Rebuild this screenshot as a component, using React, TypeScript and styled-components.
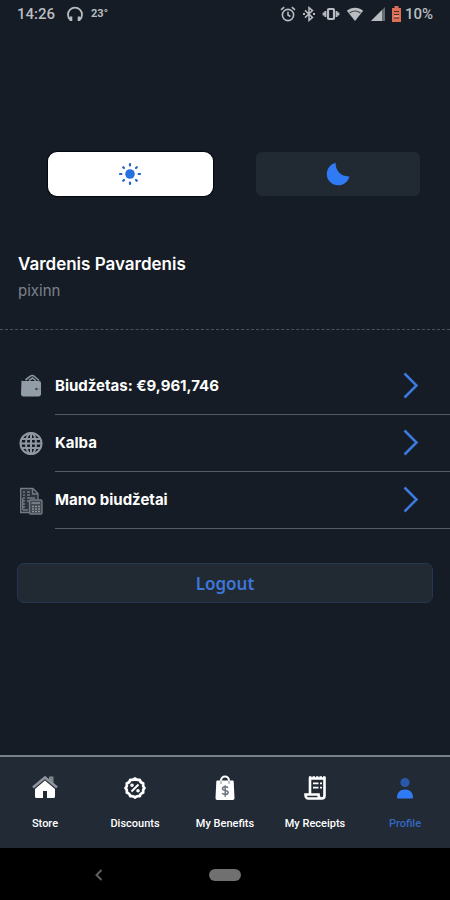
import React from "react";
import styled, { createGlobalStyle } from "styled-components";

const GlobalStyle = createGlobalStyle`
  *, *::before, *::after { box-sizing: border-box; }
  body { margin: 0; background: #151c25; }
  button { font: inherit; margin: 0; padding: 0; border: 0; background: none; cursor: pointer; }
  svg { display: block; flex: none; }
`;

const Screen = styled.div`
  display: flex;
  flex-direction: column;
  min-height: 100vh;
  background: #151c25;
  color: #fff;
  font-family: Inter, sans-serif;
`;

const StatusBar = styled.header`
  display: flex;
  align-items: center;
  justify-content: space-between;
  height: 28px;
  padding: 0 17px;
  color: #b9bcc1;
  font: 500 15px/20px Roboto, sans-serif;
`;

const StatusGroup = styled.div<{ $gap: number }>`
  display: flex;
  align-items: center;
  gap: ${(p) => p.$gap}px;
`;

const Temperature = styled.span`
  font-size: 11px;
  font-weight: 700;
`;

const Battery = styled.div`
  display: flex;
  align-items: center;
  gap: 4px;
`;

const Content = styled.main`
  display: flex;
  flex: 1;
  flex-direction: column;
`;

const ThemeSwitch = styled.div`
  display: grid;
  grid-template-columns: 1fr 1fr;
  gap: 43px;
  padding: 124px 30px 0 48px;
`;

const ThemeButton = styled.button<{ $active?: boolean }>`
  display: flex;
  align-items: center;
  justify-content: center;
  height: 44px;
  border-radius: ${(p) => (p.$active ? 9 : 6)}px;
  background: ${(p) => (p.$active ? "#fff" : "#212a33")};
  box-shadow: ${(p) => (p.$active ? "0 0 1px 1px #05080c" : "none")};
`;

const Identity = styled.section`
  padding: 56px 18px 26px;
  border-bottom: 1px dashed #4a515a;
`;

const FullName = styled.h1`
  margin: 0;
  font-size: 17px;
  font-weight: 600;
  line-height: 24px;
`;

const Account = styled.p`
  margin: 3px 0 0;
  color: #7d828e;
  font-size: 15px;
  line-height: 24px;
`;

const Menu = styled.ul`
  margin: 28px 0 0;
  padding: 0;
  list-style: none;
`;

const MenuItem = styled.button`
  display: flex;
  align-items: center;
  gap: 11px;
  width: 100%;
  padding-left: 18px;
  color: #fff;
  text-align: left;
`;

const MenuBody = styled.span`
  display: flex;
  flex: 1;
  align-items: center;
  justify-content: space-between;
  height: 57px;
  padding-right: 31px;
  border-bottom: 1px solid #565b62;
`;

const MenuLabel = styled.span`
  font-size: 15px;
  font-weight: 700;
  line-height: 24px;
`;

const LogoutButton = styled.button`
  height: 40px;
  margin: 34px 17px 24px;
  padding-top: 2px;
  border: 1px solid #243650;
  border-radius: 7px;
  background: #212a33;
  color: #3d76d8;
  font: 600 17px/24px "Noto Sans", sans-serif;
`;

const TabBar = styled.nav`
  display: grid;
  grid-template-columns: repeat(5, 1fr);
  height: 93px;
  border-top: 2px solid #78818a;
  background: #212a35;
`;

const Tab = styled.a<{ $active?: boolean }>`
  display: flex;
  flex-direction: column;
  align-items: center;
  gap: 15px;
  padding-top: 18px;
  color: ${(p) => (p.$active ? "#3567c0" : "#fff")};
  font: 500 11px/16px Roboto, sans-serif;
  text-decoration: none;
  white-space: nowrap;
`;

const SystemBar = styled.footer`
  display: grid;
  grid-template-columns: 1fr auto 1fr;
  align-items: center;
  height: 52px;
  padding-top: 2px;
  background: #000;
`;

const BackButton = styled.button`
  display: flex;
  justify-content: center;
  width: 24px;
  margin-left: 87px;
`;

const HomeButton = styled.button`
  width: 32px;
  height: 12px;
  border-radius: 6px;
  background: #707070;
`;

const HeadphonesIcon = () => (
  <svg width="18" height="18" viewBox="0 0 18 18" fill="none" stroke="currentColor">
    <path d="M4 14.5A7 7 0 1 1 14 14.5" strokeWidth="1.8" />
    <path d="M5 11.5v4.5M13 11.5v4.5" strokeWidth="2.6" />
  </svg>
);

const AlarmIcon = () => (
  <svg width="16" height="16" viewBox="0 0 16 16" fill="none" stroke="currentColor" strokeWidth="1.6">
    <circle cx="8" cy="9" r="5.6" />
    <path d="M8 5.8V9l2.4 1.5M1 3.8l3.2-2.7M15 3.8l-3.2-2.7" />
  </svg>
);

const BluetoothIcon = () => (
  <svg width="14" height="16" viewBox="0 0 14 16" fill="none" stroke="currentColor" strokeWidth="1.5">
    <path d="M3 4.4l7.5 7L7 14.3V1.7l3.5 2.9L3 11.6" />
    <path d="M1 8h2M11 8h2" strokeWidth="2" />
  </svg>
);

const VibrateIcon = () => (
  <svg width="18" height="16" viewBox="0 0 18 16" fill="none" stroke="currentColor">
    <rect x="6" y="3" width="6" height="10" rx="1" strokeWidth="2.2" />
    <path d="M3.4 5v6M14.6 5v6M1.6 6.5v3M16.4 6.5v3" strokeWidth="1.9" />
  </svg>
);

const WifiIcon = () => (
  <svg width="18" height="16" viewBox="0 0 18 16">
    <path d="M.8 4.7C5.5.7 12.5.7 17.2 4.7L9 15z" fill="currentColor" />
    <path d="M3.5 7q5.500-4 11 0" fill="none" stroke="#454b53" strokeWidth="1.2" />
  </svg>
);

const SignalIcon = () => (
  <svg width="16" height="16" viewBox="0 0 16 16">
    <path d="M1 15L15 1v14z" fill="#666b72" />
    <path d="M1 15L12 4v11z" fill="currentColor" />
  </svg>
);

const BatteryIcon = () => (
  <svg width="9" height="16" viewBox="0 0 9 16">
    <path d="M2.5 0h4v2H9v14H0V2h2.5z" fill="#dd6d55" />
    <path d="M2 5.5h5M2 8.5h5M2 12h5" stroke="#43312f" strokeWidth="1.2" />
    <path d="M2.2 10.2h4.600" stroke="#e9b5a6" />
  </svg>
);

const SunIcon = () => (
  <svg width="24" height="24" viewBox="0 0 24 24" stroke="#2563c7" strokeLinecap="round" strokeWidth="2.2">
    <circle cx="12" cy="12" r="4.8" fill="#286fdf" stroke="none" />
    <path d="M12 2v1.400M12 20.600V22M2 12h1.400M20.600 12H22M5.200 5.200l.8.800M18 18l.8.800M18.800 5.200l-.8.800M6 18l-.8.800" />
  </svg>
);

const MoonIcon = () => (
  <svg width="24" height="24" viewBox="0 0 24 24">
    <path d="M9.7.8C9.2 7.3 13.7 14.7 23.4 14.4 21.9 20 17.5 23.2 12.3 23.2 6 23.2.8 18.5.8 12.2.8 6.8 4.4 2.2 9.7.8z" fill="#307af5" />
  </svg>
);

const WalletIcon = () => (
  <svg width="26" height="26" viewBox="0 0 26 26">
    <path d="M7.5 6L12 2.5c1.500-1.300 3-1.300 4.500 0L21 6.5M11 6.5l3.500-2.500 3.500 3" fill="none" stroke="#8b959e" strokeWidth="1.6" />
    <path d="M3.5 5.7c0 1.200 1 1.300 2.500 1.300h15c1.200 0 2 .8 2 2v11c0 1.600-1 2.500-2.500 2.500h-15C4 22.500 3 21.500 3 20z" fill="#929da7" />
    <circle cx="18.5" cy="15" r="1.3" fill="#3a444e" />
    <path d="M19 15h4" stroke="#7b858f" />
  </svg>
);

const GlobeIcon = () => (
  <svg width="26" height="26" viewBox="0 0 26 26" fill="none" stroke="#9298a1" strokeWidth="2">
    <circle cx="13" cy="12.5" r="10.5" />
    <ellipse cx="13" cy="12.5" rx="5" ry="10.5" />
    <path d="M13 2v21M2.5 12.500h21M4 8h18M4 17h18" />
  </svg>
);

const BudgetIcon = () => (
  <svg width="26" height="28" viewBox="0 0 26 28" fill="none" stroke="#747a83" strokeWidth="1.3">
    <path d="M11.5 25.5H2.7v-24H15l5 5v6" fill="#2b323a" />
    <path d="M14.5 1.5V7H20" />
    <path d="M5 5h2M9 5h3M5 8h2M9 8h3M5 11h2M9 11h8M5 14h2M9 14h3M5 17h2M5 20h2M5 23h5" strokeWidth="1.5" />
    <path d="M4.7 11v12" />
    <rect x="11.5" y="13" width="12.5" height="14" rx="1" fill="#42484f" />
    <path d="M13.5 16h8.500" strokeWidth="2" />
    <path d="M14 19.5h2M17 19.5h2M20 19.5h2M14 22h2M17 22h2M20 22h2M14 24.5h2M17 24.5h2M20 24.5h2" strokeWidth="1.6" stroke="#8c9199" />
  </svg>
);

const ChevronIcon = () => (
  <svg width="18" height="28" viewBox="0 0 18 28" fill="none" stroke="#3c7ae0" strokeWidth="2.5">
    <path d="M3.5 1.5l12 12-12 12" />
  </svg>
);

const StoreIcon = () => (
  <svg width="26" height="26" viewBox="0 0 26 26">
    <path d="M17 1.5h4.500v8L17 6z" fill="#7e858e" />
    <path d="M13 5.5L23 14v7.5c0 .8-.5 1.500-1.500 1.500H15v-7h-4v7H4.500C3.500 23 3 22.300 3 21.500V14z" fill="#fff" />
    <path d="M1 12.500L13 2.500l12 10" fill="none" stroke="#8e949b" strokeWidth="2.6" />
  </svg>
);

const DiscountIcon = () => (
  <svg width="26" height="26" viewBox="0 0 26 26" fill="none" stroke="#fff">
    <path
      d="M13 3.500Q14.700 5.400 17.750 4.800Q18.200 7.800 21.200 8.250Q20.600 11.300 22.500 13Q20.600 14.700 21.200 17.750Q18.200 18.200 17.750 21.200Q14.700 20.600 13 22.500Q11.300 20.600 8.250 21.200Q7.800 18.200 4.800 17.750Q5.400 14.700 3.500 13Q5.400 11.300 4.800 8.250Q7.800 7.800 8.250 4.800Q11.300 5.400 13 3.500z"
      strokeWidth="2.7"
      strokeLinejoin="round"
    />
    <path d="M9.500 16.500l7-7" strokeWidth="2" />
    <circle cx="10" cy="10.300" r="1" strokeWidth="1.6" />
    <circle cx="16" cy="15.800" r="1" strokeWidth="1.6" />
  </svg>
);

const BenefitsIcon = () => (
  <svg width="26" height="26" viewBox="0 0 26 26" fill="none">
    <path d="M9 9V5.500a4 4 0 0 1 8 0V9" stroke="#fff" strokeWidth="2.2" />
    <path d="M5.500 5.500h15c.8 0 1.200.5 1.200 1.200L22.500 23c0 1.300-.6 2-1.800 2H5.300c-1.200 0-1.800-.7-1.800-2L4.300 6.700c0-.7.4-1.200 1.200-1.200z" fill="#fff" />
    <path d="M9 5.500v3.500M17 5.500v3.500" stroke="#89909a" />
    <path d="M16 12.800c-1-1.500-5.500-1.600-5.500.8 0 2.800 5.600 1.200 5.600 4 0 2.500-4.800 2.400-6 .5M13.200 10.300v11.400" stroke="#6b747f" strokeWidth="1.5" />
  </svg>
);

const ReceiptIcon = () => (
  <svg width="26" height="26" viewBox="0 0 26 26" fill="none" stroke="#fff">
    <path d="M8 19V3.500h14.500v17c0 2-1 3-2.700 3H6.500c-2 0-3-1.500-3-4h13c0 2.500 1 4 3.300 4" strokeWidth="2.6" />
    <path d="M11 8.300h5.500M11 12.600h5.500M18 8.300h2M18 12.600h2" strokeWidth="1.8" />
    <path d="M7 2.200h16.500" strokeWidth="2" strokeDasharray="2.5 1" />
  </svg>
);

const ProfileIcon = () => (
  <svg width="26" height="26" viewBox="0 0 26 26">
    <circle cx="13" cy="7.500" r="4.600" fill="#2859a9" />
    <path d="M5 22.500c0-5 3-8 8-8s8 3 8 8c0 .6-.4.900-1 .9H6c-.6 0-1-.3-1-.9z" fill="#307af5" />
  </svg>
);

const BackIcon = () => (
  <svg width="10" height="14" viewBox="0 0 10 14" fill="none" stroke="#606060" strokeWidth="2">
    <path d="M7.500 2L2.500 7l5 5" />
  </svg>
);

const menuItems = [
  { label: "Biudžetas: €9,961,746", Icon: WalletIcon },
  { label: "Kalba", Icon: GlobeIcon },
  { label: "Mano biudžetai", Icon: BudgetIcon },
];

const tabs = [
  { label: "Store", Icon: StoreIcon },
  { label: "Discounts", Icon: DiscountIcon },
  { label: "My Benefits", Icon: BenefitsIcon },
  { label: "My Receipts", Icon: ReceiptIcon },
  { label: "Profile", Icon: ProfileIcon, active: true },
];

export default function App() {
  return (
    <Screen>
      <GlobalStyle />
      <StatusBar>
        <StatusGroup $gap={11}>
          <span>14:26</span>
          <StatusGroup $gap={7}>
            <HeadphonesIcon />
            <Temperature>23°</Temperature>
          </StatusGroup>
        </StatusGroup>
        <StatusGroup $gap={6}>
          <AlarmIcon />
          <BluetoothIcon />
          <VibrateIcon />
          <WifiIcon />
          <SignalIcon />
          <Battery>
            <BatteryIcon />
            <span>10%</span>
          </Battery>
        </StatusGroup>
      </StatusBar>
      <Content>
        <ThemeSwitch role="group" aria-label="Theme">
          <ThemeButton $active type="button" aria-label="Light" aria-pressed="true">
            <SunIcon />
          </ThemeButton>
          <ThemeButton type="button" aria-label="Dark" aria-pressed="false">
            <MoonIcon />
          </ThemeButton>
        </ThemeSwitch>
        <Identity>
          <FullName>Vardenis Pavardenis</FullName>
          <Account>pixinn</Account>
        </Identity>
        <Menu>
          {menuItems.map(({ label, Icon }) => (
            <li key={label}>
              <MenuItem type="button">
                <Icon />
                <MenuBody>
                  <MenuLabel>{label}</MenuLabel>
                  <ChevronIcon />
                </MenuBody>
              </MenuItem>
            </li>
          ))}
        </Menu>
        <LogoutButton type="button">Logout</LogoutButton>
      </Content>
      <TabBar>
        {tabs.map(({ label, Icon, active }) => (
          <Tab key={label} href="#" $active={active} aria-current={active ? "page" : undefined}>
            <Icon />
            <span>{label}</span>
          </Tab>
        ))}
      </TabBar>
      <SystemBar>
        <BackButton type="button" aria-label="Back">
          <BackIcon />
        </BackButton>
        <HomeButton type="button" aria-label="Home" />
      </SystemBar>
    </Screen>
  );
}
